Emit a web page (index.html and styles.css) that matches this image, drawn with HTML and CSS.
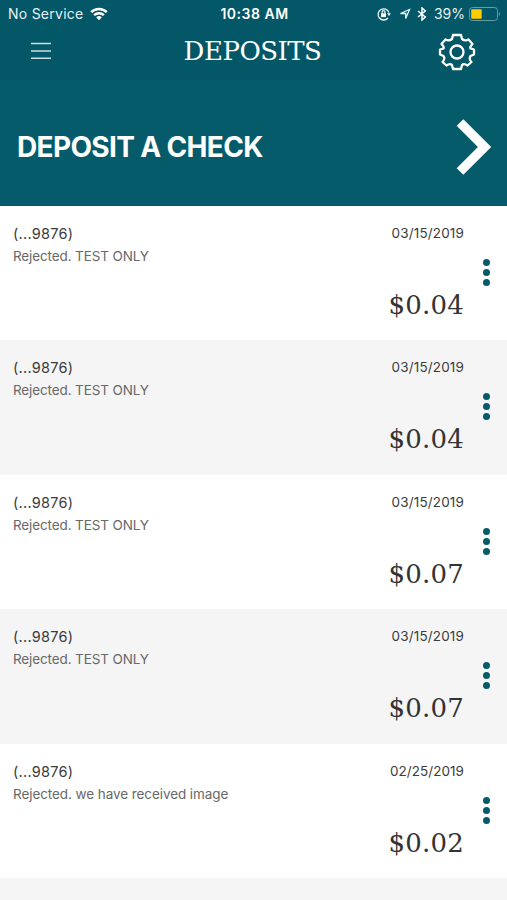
FILE: index.html
```html
<!DOCTYPE html>
<html lang="en">
<head>
<meta charset="utf-8">
<title>Deposits</title>
<link rel="stylesheet" href="styles.css">
</head>
<body>
<header class="top">
  <div class="status">
    <div class="status-left"><span class="carrier">No Service</span>
      <svg class="wifi" width="18" height="14" viewBox="0 0 18 14" fill="none" stroke="#fff" stroke-width="2.4"><path d="M1.2 5.2a11 11 0 0 1 15.6 0M4.1 8.2a7 7 0 0 1 9.8 0"/><path d="M9 13.2L6.2 10.3a4 4 0 0 1 5.6 0z" fill="#fff" stroke="none"/></svg>
    </div>
    <span class="clock">10:38 AM</span>
    <div class="status-right">
      <svg class="lock" width="14" height="14" viewBox="0 0 14 14" fill="none" stroke="#eaf5f7" stroke-width="1.3"><path d="M11 11A5.600 5.600 0 1 1 12 5.6"/><path d="M10 6.200h4L12 9z" fill="#fff" stroke="none"/><path d="M4 6.300h5v3.800H4z" fill="#fff" stroke="none"/><path d="M5.200 6.500V5a1.400 1.400 0 0 1 2.800 0v1.500"/></svg>
      <svg class="arrow" width="12" height="12" viewBox="0 0 12 12" fill="none" stroke="#eaf5f7" stroke-width="1.3"><path d="M1.500 5.500L10.500 1.500 6.700 10.500V5.500z"/></svg>
      <svg class="bt" width="10" height="14" viewBox="0 0 10 14" fill="none" stroke="#fff" stroke-width="1.5"><path d="M1 4l7.300 6L5 13V1l3.300 3L1 10"/></svg>
      <span class="percent">39%</span>
      <svg class="battery" width="32" height="14" viewBox="0 0 32 14"><rect x=".5" y=".5" width="28" height="13" rx="3" fill="none" stroke="#669ca8"/><rect x="2.200" y="2.200" width="10.500" height="9.600" rx="1" fill="#fc0"/><path d="M30 4.700q2 2.300 0 4.600z" fill="#669ca8"/></svg>
    </div>
  </div>
  <nav class="nav">
    <svg class="menu" width="20" height="18" viewBox="0 0 20 18" stroke="#c9e0e4" stroke-width="1.500"><path d="M0 1.500h20M0 9h20M0 16.300h20"/></svg>
    <h1 class="title">DEPOSITS</h1>
    <svg class="gear" width="38" height="38" viewBox="-19 -19 38 38" fill="none" stroke="#fff" stroke-width="2.300" stroke-linejoin="round"><path d="M-4 -17H4L5 -13Q8 -10.500 11.500 -12.500L15.500 -8Q12.500 -5 13.500 -3.500L17 -2.500V2.500L13.500 4Q11.500 7 14.500 10L10.500 13.500Q7 11 5 13L4 17H-4L-5 13Q-7 11 -10.500 13.500L-14.500 10Q-11.500 7 -13.500 4L-17 2.500V-2.500L-13.500 -3.500Q-12.500 -5 -15.500 -8L-11.500 -12.500Q-8 -10.500 -5 -13Z"/><circle r="6.500"/></svg>
  </nav>
</header>
<a class="deposit"><span class="deposit-text">DEPOSIT A CHECK</span>
  <svg class="chevron" width="36" height="58" viewBox="0 0 36 58" fill="none" stroke="#fff" stroke-width="9.500"><path d="M4 4.500L28.500 29 4 53.500"/></svg>
</a>
<main class="list">
  <article class="row"><div class="info"><div class="account">(...9876)</div><div class="note">Rejected. TEST ONLY</div></div><div class="value"><time class="date">03/15/2019</time><div class="amount">$0.04</div></div><div class="dots"><i></i><i></i><i></i></div></article>
  <article class="row"><div class="info"><div class="account">(...9876)</div><div class="note">Rejected. TEST ONLY</div></div><div class="value"><time class="date">03/15/2019</time><div class="amount">$0.04</div></div><div class="dots"><i></i><i></i><i></i></div></article>
  <article class="row"><div class="info"><div class="account">(...9876)</div><div class="note">Rejected. TEST ONLY</div></div><div class="value"><time class="date">03/15/2019</time><div class="amount">$0.07</div></div><div class="dots"><i></i><i></i><i></i></div></article>
  <article class="row"><div class="info"><div class="account">(...9876)</div><div class="note">Rejected. TEST ONLY</div></div><div class="value"><time class="date">03/15/2019</time><div class="amount">$0.07</div></div><div class="dots"><i></i><i></i><i></i></div></article>
  <article class="row"><div class="info"><div class="account">(...9876)</div><div class="note long">Rejected. we have received image</div></div><div class="value"><time class="date late">02/25/2019</time><div class="amount">$0.02</div></div><div class="dots"><i></i><i></i><i></i></div></article>
  <div class="row partial"></div>
</main>
</body>
</html>
```
FILE: styles.css
```css
* { box-sizing: border-box; }
body { margin: 0; height: 900px; overflow: hidden; background: #fff; font-family: Inter, sans-serif; color: #3c3c3c; }
svg { display: block; flex: none; }
.top { height: 80px; background: #035766; color: #fff; }
.status { height: 28px; display: grid; grid-template-columns: 1fr auto 1fr; align-items: center; padding: 0 6px 0 8px; font-size: 14px; line-height: 28px; }
.status-left, .status-right { display: flex; align-items: center; }
.status-right { justify-content: flex-end; }
.carrier { letter-spacing: .25px; margin-right: 7px; color: #e5f2f4; }
.clock { font-weight: 600; letter-spacing: .5px; }
.lock { margin-right: 8px; }
.arrow { margin-right: 6px; }
.bt { margin-right: 7px; }
.percent { margin-right: 4px; color: #e5f2f4; }
.nav { height: 52px; display: grid; grid-template-columns: 1fr auto 1fr; padding: 0 31px; }
.menu { margin-top: 14px; }
.gear { justify-self: end; margin-top: 5px; }
.title { margin: 0; font: 400 26px/46px "DejaVu Serif", serif; letter-spacing: -.5px; position: relative; left: -1px; }
.deposit { height: 126px; background: #055b69; color: #fff; display: flex; align-items: center; justify-content: space-between; padding: 8px 15px 0 17px; }
.deposit-text { font-weight: 700; font-size: 28px; letter-spacing: -.65px; }
.list { height: 694px; overflow: hidden; }
.row { height: 134.4px; display: flex; padding: 17px 17px 0 13px; }
.row:nth-child(even) { background: #f5f5f5; }
.row.partial { height: 22px; }
.info { flex: 1; }
.account { font-size: 14.5px; line-height: 22px; letter-spacing: .25px; }
.note { font-size: 13.5px; line-height: 22px; letter-spacing: -.12px; color: #686868; }
.note.long { letter-spacing: -.08px; }
.value { text-align: right; margin-right: 19px; }
.date { display: block; font-size: 13.5px; line-height: 21px; letter-spacing: .15px; }
.date.late { letter-spacing: .05px; }
.amount { margin-top: 40px; font: 26px/42px "DejaVu Serif", serif; letter-spacing: .2px; color: #333; }
.dots { display: flex; flex-direction: column; gap: 3px; padding-top: 36px; }
.dots i { width: 7px; height: 7px; border-radius: 50%; background: #055b69; }
```
